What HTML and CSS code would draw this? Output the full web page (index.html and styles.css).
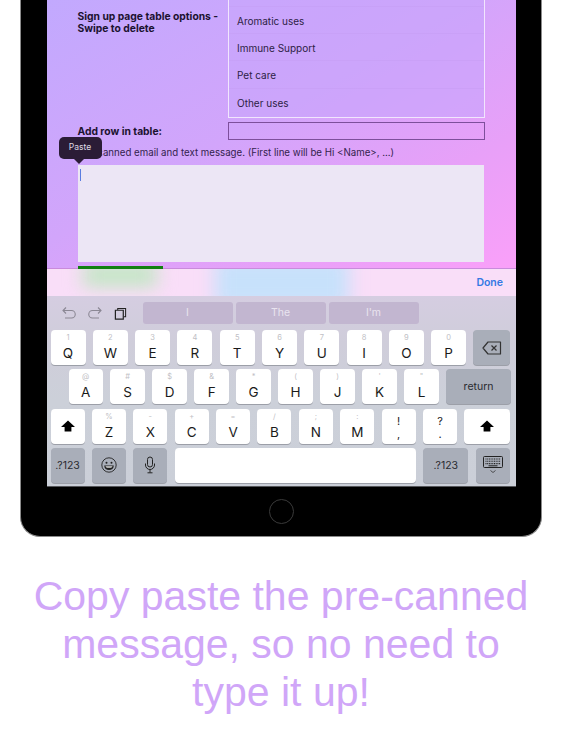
FILE: index.html
```html
<!DOCTYPE html>
<html lang="en">
<head>
<meta charset="utf-8">
<title>Copy paste the pre-canned message</title>
<link rel="stylesheet" href="styles.css">
</head>
<body>
<main class="tablet">
  <div class="screen">
    <section class="form">
      <div class="options">
        <div class="label options-label">Sign up page table options -<br>Swipe to delete</div>
        <div class="table">
          <div class="row row-cut"></div>
          <div class="row">Aromatic uses</div>
          <div class="row">Immune Support</div>
          <div class="row">Pet care</div>
          <div class="row row-last">Other uses</div>
        </div>
      </div>
      <div class="add">
        <div class="label">Add row in table:</div>
        <div class="input"></div>
      </div>
      <div class="canned">Pre-canned email and text message. (First line will be Hi &lt;Name&gt;, ...)
        <div class="tip">Paste</div>
      </div>
      <div class="message"><span class="caret"></span></div>
      <div class="progress"></div>
    </section>
    <div class="accessory">
      <span class="blob blob-green"></span>
      <span class="blob blob-blue"></span>
      <span class="done">Done</span>
    </div>
    <section class="keyboard">
      <div class="toolbar">
        <div class="tools">
          <svg class="tool" viewBox="0 0 14 14"><path d="M1 4.500h8.500a3.600 3.600 0 0 1 0 7.500H3M4 1.500l-3 3 3 3" fill="none" stroke="#8b8794" stroke-width="1.100"/></svg>
          <svg class="tool" viewBox="0 0 14 14"><path d="M13 4.500H4.500a3.600 3.600 0 0 0 0 7.500H11M10 1.500l3 3-3 3" fill="none" stroke="#8b8794" stroke-width="1.100"/></svg>
          <svg class="tool tool-copy" viewBox="0 0 14 14"><path d="M4 3.200V1.500h8.500v9h-2" fill="none" stroke="#222" stroke-width="1.100"/><path d="M1.500 3.500h8.500v9.500H1.500z" fill="none" stroke="#222" stroke-width="1.300"/></svg>
        </div>
        <div class="suggest">I</div>
        <div class="suggest">The</div>
        <div class="suggest">I'm</div>
      </div>
      <div class="keys keys-1">
        <div class="key"><small>1</small>Q</div>
        <div class="key"><small>2</small>W</div>
        <div class="key"><small>3</small>E</div>
        <div class="key"><small>4</small>R</div>
        <div class="key"><small>5</small>T</div>
        <div class="key"><small>6</small>Y</div>
        <div class="key"><small>7</small>U</div>
        <div class="key"><small>8</small>I</div>
        <div class="key"><small>9</small>O</div>
        <div class="key"><small>0</small>P</div>
        <div class="key gray w-del"><svg class="ico-del" viewBox="0 0 20 14"><path d="M6 1h12.500v12H6L1 7z" fill="none" stroke="#333" stroke-width="1.200" stroke-linejoin="round"/><path d="M9.500 4.500l5 5M14.500 4.500l-5 5" stroke="#333" stroke-width="1.200"/></svg></div>
      </div>
      <div class="keys keys-2">
        <div class="key"><small>@</small>A</div>
        <div class="key"><small>#</small>S</div>
        <div class="key"><small>$</small>D</div>
        <div class="key"><small>&amp;</small>F</div>
        <div class="key"><small>*</small>G</div>
        <div class="key"><small>(</small>H</div>
        <div class="key"><small>)</small>J</div>
        <div class="key"><small>'</small>K</div>
        <div class="key"><small>"</small>L</div>
        <div class="key gray w-return"><span class="word">return</span></div>
      </div>
      <div class="keys keys-3">
        <div class="key"><svg class="ico-shift" viewBox="0 0 14 12"><path d="M7 .5L14 7h-3.600v4.500H3.600V7H0z" fill="#000"/></svg></div>
        <div class="key"><small>%</small>Z</div>
        <div class="key"><small>-</small>X</div>
        <div class="key"><small>+</small>C</div>
        <div class="key"><small>=</small>V</div>
        <div class="key"><small>/</small>B</div>
        <div class="key"><small>;</small>N</div>
        <div class="key"><small>:</small>M</div>
        <div class="key punct"><span class="p1">!</span><span class="p2">,</span></div>
        <div class="key punct"><span class="p1">?</span><span class="p2">.</span></div>
        <div class="key w-shift"><svg class="ico-shift" viewBox="0 0 14 12"><path d="M7 .5L14 7h-3.600v4.500H3.600V7H0z" fill="#000"/></svg></div>
      </div>
      <div class="keys keys-3 last">
        <div class="key gray"><span class="word">.?123</span></div>
        <div class="key gray"><svg class="ico-emoji" viewBox="0 0 16 16"><circle cx="8" cy="8" r="7.200" fill="none" stroke="#222" stroke-width=".9"/><circle cx="5.500" cy="5.800" r="1" fill="#222"/><circle cx="10.500" cy="5.800" r="1" fill="#222"/><path d="M3.200 8.400h9.600c0 3-2.200 4.600-4.800 4.600s-4.800-1.600-4.800-4.600z" fill="#222"/><path d="M4.500 9.200h7c-.3 1-1 1.500-3.500 1.500s-3.200-.5-3.500-1.500z" fill="#ddd"/></svg></div>
        <div class="key gray"><svg class="ico-mic" viewBox="0 0 12 18"><rect x="3.500" y="1" width="5" height="10" rx="2.500" fill="none" stroke="#222" stroke-width="1"/><path d="M1.500 7.500v1.500a4.500 4.500 0 0 0 9 0V7.500M6 13.500v3M3.500 16.800h5" fill="none" stroke="#222" stroke-width="1"/></svg></div>
        <div class="key w-space"></div>
        <div class="key gray w-num"><span class="word">.?123</span></div>
        <div class="key gray w-kbd"><svg class="ico-kbd" viewBox="0 0 20 18"><rect x=".5" y=".5" width="19" height="11" rx="1" fill="none" stroke="#222"/><path d="M2.500 3h15M2.500 5.300h15M2.500 7.600h15" stroke="#222" stroke-width="1.100" stroke-dasharray="1 .7"/><path d="M5.500 9.800h9" stroke="#222"/><path d="M7.500 14.500l2.500 2 2.500-2" fill="none" stroke="#333" stroke-width=".8"/></svg></div>
      </div>
    </section>
  </div>
  <div class="chin"><span class="home"></span></div>
</main>
<h1 class="caption">Copy paste the pre-canned<br>message, so no need to<br>type it up!</h1>
</body>
</html>
```
FILE: styles.css
```css
* { box-sizing: border-box; }
html, body { margin: 0; padding: 0; background: #fff; overflow: hidden; }
body { width: 562px; height: 750px; font-family: Inter, "Liberation Sans", sans-serif; }

.tablet {
  width: 522px;
  height: 537px;
  margin-left: 20px;
  padding: 0 25.500px;
  background: #000;
  border: solid #8b8b8b;
  border-width: 0 1.500px 1.500px 1.500px;
  border-radius: 0 0 20px 20px;
  display: flex;
  flex-direction: column;
}
.screen { height: 487px; display: flex; flex-direction: column; flex: none; overflow: hidden; border-bottom: 1px solid #55565a; }

.form {
  height: 269px;
  flex: none;
  padding-left: 31px;
  background: linear-gradient(150deg, #c2a9fe 0%, #d2a5fb 45%, #e8a0f8 75%, #faa0f9 100%);
  border-bottom: 1px solid #c98bdc;
  display: flex;
  flex-direction: column;
}
.label { font-size: 10.300px; font-weight: 700; line-height: 12px; color: #1b1230; }
.options { display: flex; height: 117px; flex: none; }
.options-label { width: 150px; padding-top: 10px; flex: none; }
.table {
  width: 257px;
  height: 118px;
  flex: none;
  border: solid #f1e6fd;
  border-width: 0 1.500px 1.500px 1.500px;
  background: rgba(200, 165, 252, .6);
}
.row {
  height: 27.200px;
  display: flex;
  align-items: center;
  padding: 1.500px 0 0 8.500px;
  font-size: 10px;
  color: #2d2245;
  border-bottom: 1px solid rgba(195, 155, 240, .35);
}
.row-cut { height: 7px; padding: 0; }
.row-last { border-bottom: 0; }

.add { display: flex; margin-top: 5px; height: 18px; flex: none; }
.add .label { width: 150px; flex: none; line-height: 19px; }
.input { width: 257px; height: 17.500px; flex: none; border: 1.500px solid #7d4f9b; }

.canned { position: relative; height: 25px; flex: none; line-height: 25px; font-size: 9.700px; color: #33224d; white-space: nowrap; }
.tip {
  position: absolute;
  left: -19px;
  top: -3px;
  width: 43px;
  height: 22px;
  border-radius: 5px;
  background: #2b1c36;
  color: #ded8e2;
  font-size: 8.500px;
  line-height: 21px;
  text-align: center;
}
.tip::after {
  content: "";
  position: absolute;
  left: 15.500px;
  top: 22px;
  border: 5px solid transparent;
  border-top-color: #2b1c36;
  border-bottom: 0;
}
.message { width: 406px; height: 97px; flex: none; background: #ece6f5; padding: 4px 0 0 2px; }
.caret { display: block; width: 1px; height: 12px; background: #5b7de0; }
.progress { width: 85px; height: 3px; margin-top: 4px; flex: none; background: #128012; }

.accessory {
  position: relative;
  height: 27px;
  flex: none;
  background: #f9def8;
  display: flex;
  justify-content: flex-end;
  align-items: center;
  padding-right: 12.500px;
  overflow: hidden;
}
.blob { position: absolute; filter: blur(9px); }
.blob-green { left: 36px; top: -6px; width: 74px; height: 24px; background: #c2e6c4; }
.blob-blue { left: 168px; top: -12px; width: 134px; height: 52px; background: #c7e1fb; }
.done { position: relative; font-size: 10.500px; font-weight: 600; color: #3479e4; }

.keyboard {
  flex: 1;
  padding: 6px 4px 0;
  background: linear-gradient(180deg, #d5cde1 0%, #cfcdda 25%, #ccd0d9 55%, #cbcfd8 100%);
}
.toolbar { display: flex; height: 22px; gap: 3px; margin-bottom: 6px; }
.tools { width: 86px; margin-right: 3px; display: flex; align-items: center; gap: 12px; padding-left: 11px; flex: none; }
.tool { width: 14px; height: 14px; flex: none; }
.tool-copy { width: 13px; height: 13px; }
.suggest {
  width: 90px;
  flex: none;
  border-radius: 3px;
  background: #c2b6d0;
  color: #e9e4ef;
  font-size: 10.500px;
  line-height: 22px;
  text-align: center;
}

.keys { display: flex; height: 35px; margin-bottom: 4.300px; }
.keys .key { flex: none; }
.keys-1 { gap: 7.300px; }
.keys-1 .key { width: 35px; }
.keys-1 .w-del { width: 37px; }
.keys-2 { gap: 7.600px; padding-left: 18px; }
.keys-2 .key { width: 34.400px; }
.keys-2 .w-return { width: 64.400px; }
.keys-3 { gap: 7.400px; }
.keys-3 .key { width: 34px; }
.keys-3 .w-shift { width: 46px; }
.keys-3 .w-space { width: 241px; }
.keys-3 .w-num { width: 45.400px; }
.keys-3 .w-kbd { width: 34.600px; }
.last { margin-bottom: 0; }

.key {
  position: relative;
  background: #fff;
  border-radius: 4px;
  box-shadow: 0 1px 0 #9c9fa8;
  display: flex;
  align-items: center;
  justify-content: center;
  padding-top: 11px;
  font-size: 13.500px;
  color: #1a1a1a;
}
.key small {
  position: absolute;
  top: 3px;
  left: 0;
  right: 0;
  text-align: center;
  font-size: 7.500px;
  line-height: 10px;
  color: #c0c0c5;
}
.key:has(svg) { padding-top: 0; }
.gray { background: #a9aeb9; padding-top: 0; }
.word { font-size: 10.500px; color: #2a2b30; }
.key.punct { flex-direction: column; padding-top: 3px; color: #222; }
.p1 { font-size: 11px; line-height: 14px; }
.p2 { font-size: 11px; line-height: 13px; }

.ico-shift { width: 14px; height: 12px; }
.ico-del { width: 20px; height: 14px; }
.ico-emoji { width: 16px; height: 16px; }
.ico-mic { width: 12px; height: 18px; }
.ico-kbd { width: 20px; height: 18px; }

.chin { flex: 1; display: flex; justify-content: center; align-items: center; }
.home { width: 25px; height: 25px; border-radius: 50%; border: 1px solid #3a3a3a; }

.caption {
  margin: 35px 0 0;
  font-family: "Liberation Sans", Arial, sans-serif;
  font-size: 41px;
  font-weight: 400;
  line-height: 48px;
  text-align: center;
  color: #d0a6f8;
}
```
